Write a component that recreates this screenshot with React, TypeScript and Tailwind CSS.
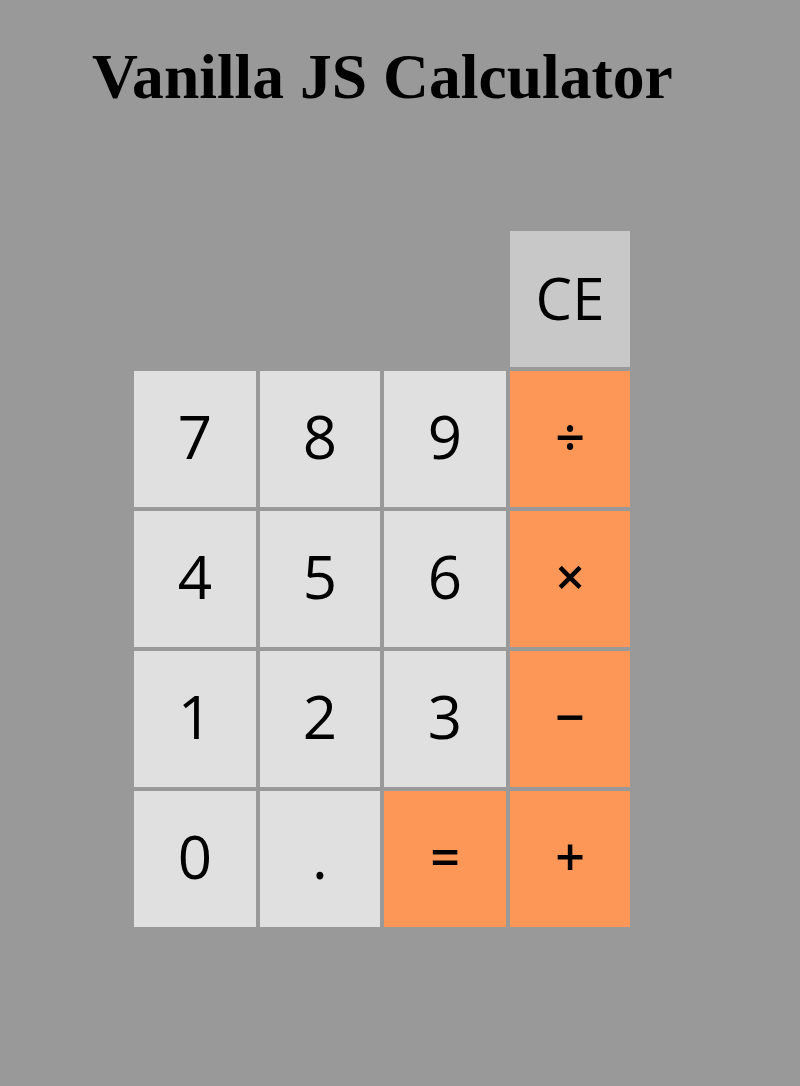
import React from "react";

const numCls =
  "flex items-center justify-center bg-[#e0e0e0] text-black text-[60px] font-medium pb-[6px]";
const opCls =
  "flex items-center justify-center bg-[#fd9757] text-black text-[52px] font-semibold pb-[6px]";

export default function App() {
  const rows: { label: string; op?: boolean }[][] = [
    [{ label: "7" }, { label: "8" }, { label: "9" }, { label: "÷", op: true }],
    [{ label: "4" }, { label: "5" }, { label: "6" }, { label: "×", op: true }],
    [{ label: "1" }, { label: "2" }, { label: "3" }, { label: "−", op: true }],
    [{ label: "0" }, { label: "." }, { label: "=", op: true }, { label: "+", op: true }],
  ];
  return (
    <div className="min-h-[1086px] w-[800px] bg-[#999999]">
      <h1
        className="pl-[92px] pt-[42px] text-[63.6px] leading-[70px] font-bold text-black"
        style={{ fontFamily: '"Liberation Serif", serif' }}
      >
        Vanilla JS Calculator
      </h1>
      <div
        className="ml-[134px] mt-[119px] grid grid-cols-[122px_120px_122px_120px] auto-rows-[136px] gap-[4px]"
        style={{ fontFamily: '"Open Sans", sans-serif' }}
      >
        <div />
        <div />
        <div />
        <div className="flex items-center justify-center bg-[#c8c8c8] text-black text-[58px] font-medium pb-[4px]">
          CE
        </div>
        {rows.flat().map((b, i) => (
          <div key={i} className={b.op ? opCls : numCls}>
            {b.label}
          </div>
        ))}
      </div>
    </div>
  );
}
